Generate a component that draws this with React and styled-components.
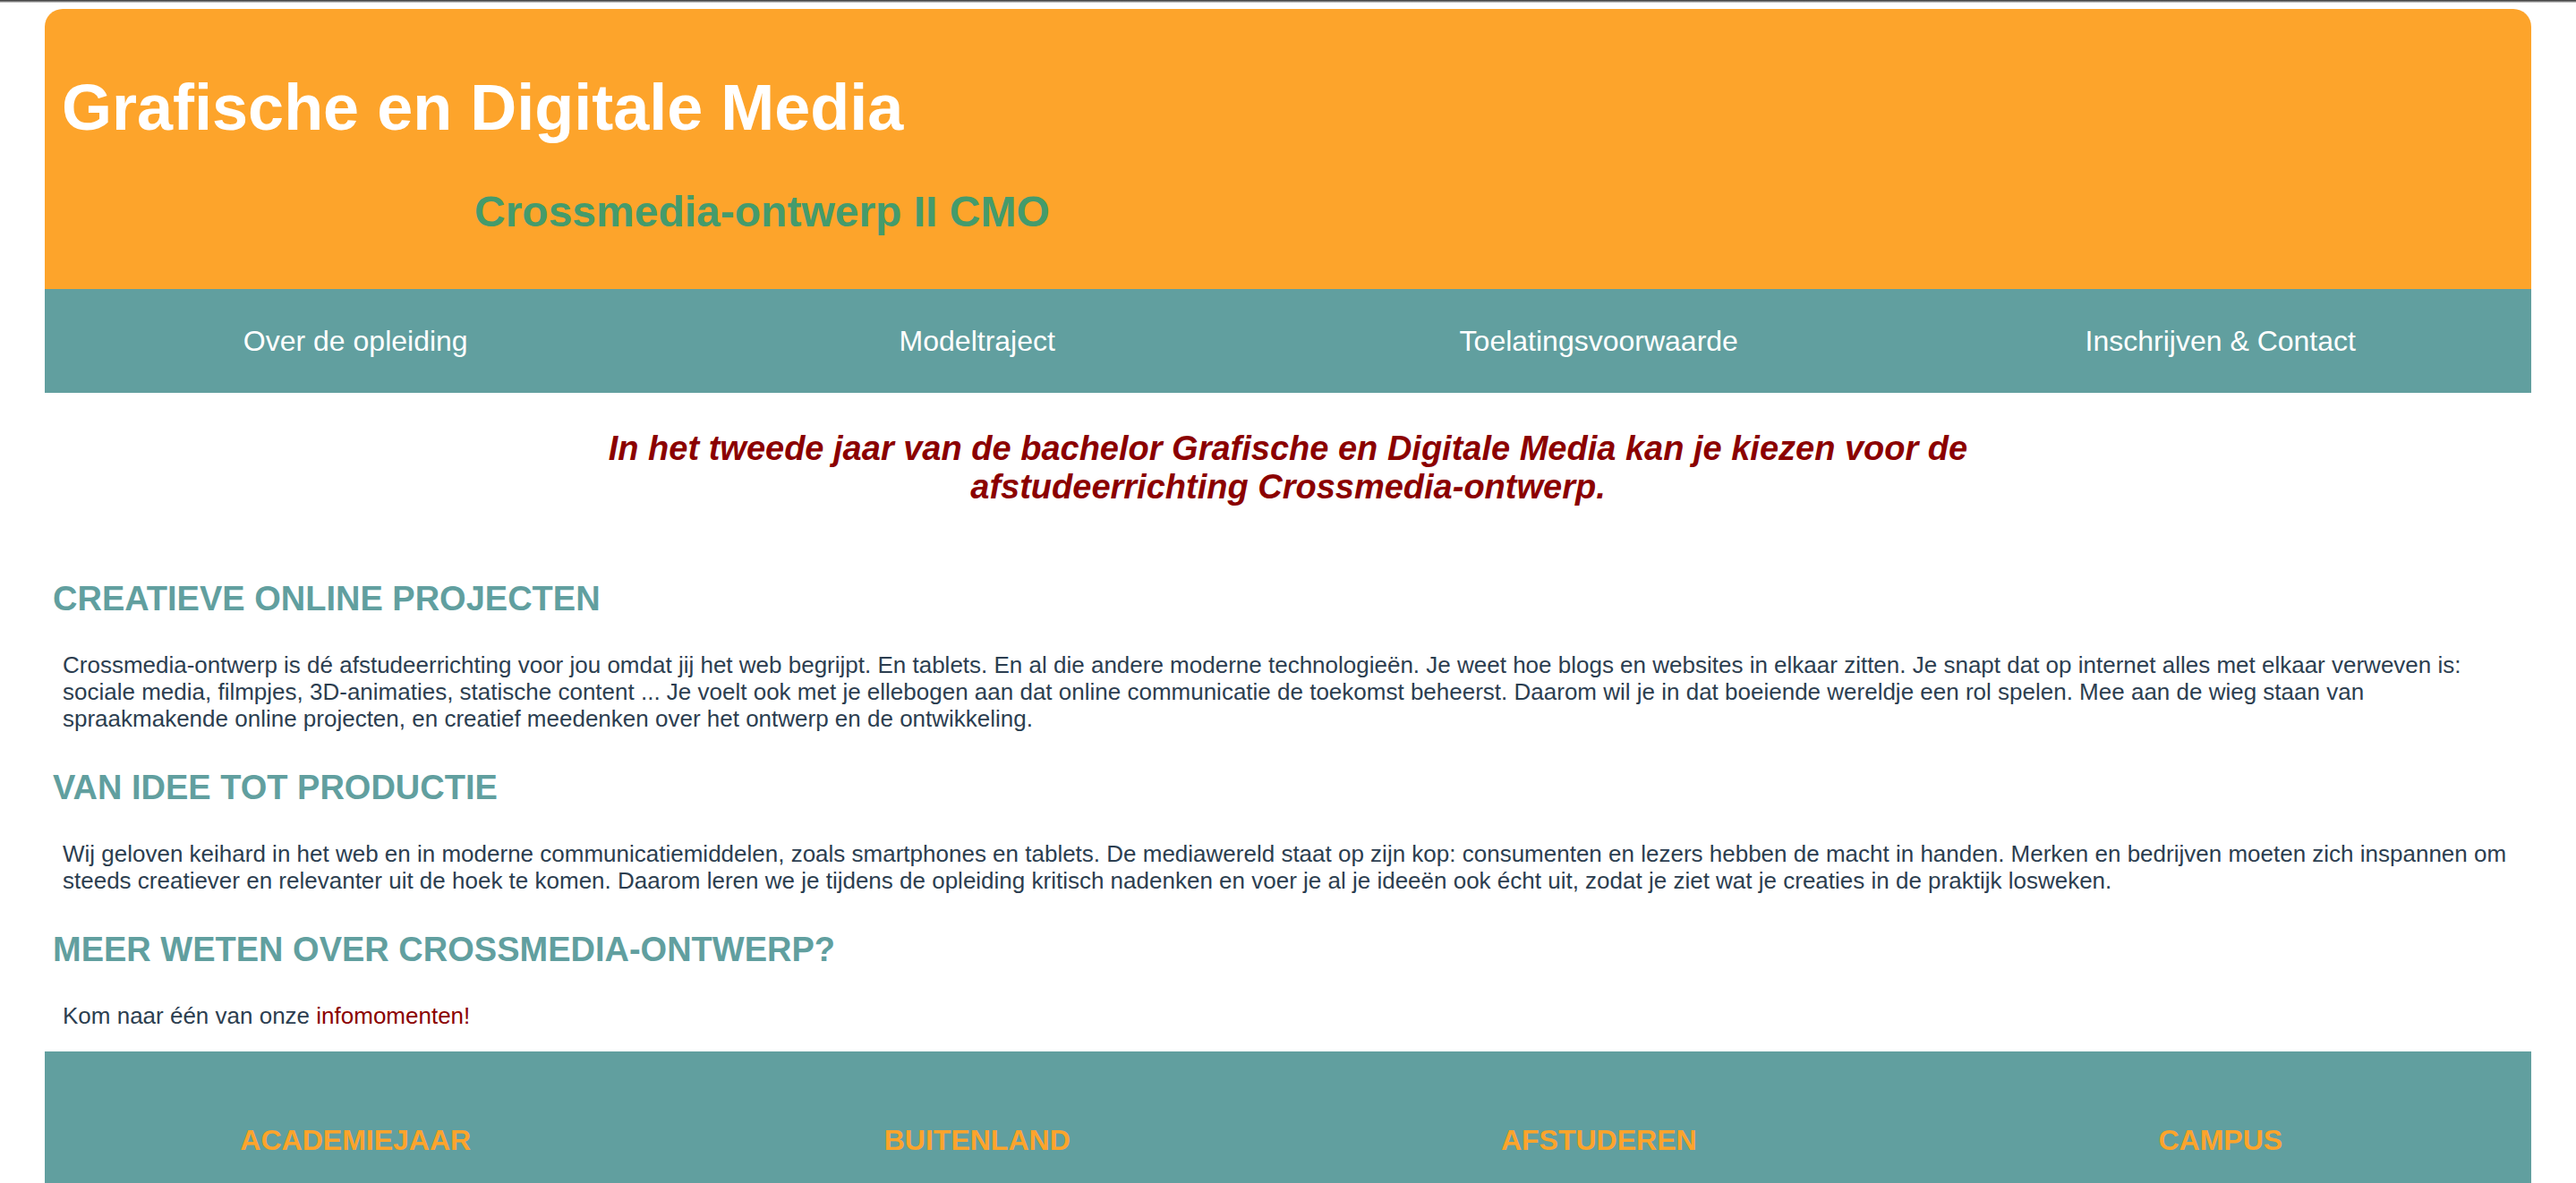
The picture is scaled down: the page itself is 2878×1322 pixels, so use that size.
import React from 'react';
import styled, { createGlobalStyle } from 'styled-components';

const orange = '#fda42b';
const teal = '#619f9f';
const darkRed = '#8b0000';

const GlobalStyle = createGlobalStyle`
  html, body {
    margin: 0;
    padding: 0;
    background: #ffffff;
  }
  body {
    font-family: "Liberation Sans", Arial, Helvetica, sans-serif;
  }
`;

const TopEdge = styled.div`
  height: 3px;
  background: linear-gradient(#2e2e2e, #8a8a8a 60%, #e6e6e6);
`;

const Page = styled.div`
  margin: 7px 50px 0;
`;

const Header = styled.header`
  background: ${orange};
  border-radius: 20px 20px 0 0;
  padding: 69px 19px 59px;
`;

const Title = styled.h1`
  margin: 0;
  font-size: 72px;
  line-height: 82px;
  font-weight: bold;
  color: #ffffff;
`;

const Subtitle = styled.h2`
  margin: 48px 0 0 461px;
  font-size: 48px;
  line-height: 55px;
  font-weight: bold;
  color: #449b6c;
`;

const Nav = styled.nav`
  display: grid;
  grid-template-columns: repeat(4, 1fr);
  align-items: center;
  height: 116px;
  background: ${teal};
`;

const NavLink = styled.a`
  text-align: center;
  font-size: 32px;
  color: #ffffff;
  text-decoration: none;
  cursor: pointer;
`;

const Main = styled.main`
  padding: 0;
`;

const Intro = styled.p`
  width: 1600px;
  margin: 41px auto 81px;
  text-align: center;
  font-size: 38px;
  line-height: 43px;
  font-weight: bold;
  font-style: italic;
  color: ${darkRed};
`;

const Heading = styled.h3`
  margin: 0 0 37px;
  padding: 0 9px;
  font-size: 38px;
  line-height: 44px;
  font-weight: bold;
  text-transform: uppercase;
  color: ${teal};
`;

const Paragraph = styled.p`
  margin: 0 0 40px;
  padding: 0 20px;
  font-size: 26px;
  line-height: 30px;
  color: #2c3e50;

  &:last-child {
    margin-bottom: 25px;
  }
`;

const InlineLink = styled.a`
  color: ${darkRed};
  text-decoration: none;
`;

const Footer = styled.footer`
  display: grid;
  grid-template-columns: repeat(4, 1fr);
  background: ${teal};
  padding: 81px 0 120px;
`;

const FooterHeading = styled.h4`
  margin: 0;
  text-align: center;
  font-size: 32px;
  line-height: 37px;
  font-weight: bold;
  text-transform: uppercase;
  color: ${orange};
`;

const navItems = ['Over de opleiding', 'Modeltraject', 'Toelatingsvoorwaarde', 'Inschrijven & Contact'];
const footerItems = ['Academiejaar', 'Buitenland', 'Afstuderen', 'Campus'];

export default function App() {
  return (
    <>
      <GlobalStyle />
      <TopEdge />
      <Page>
        <Header>
          <Title>Grafische en Digitale Media</Title>
          <Subtitle>Crossmedia-ontwerp II CMO</Subtitle>
        </Header>
        <Nav>
          {navItems.map((item) => (
            <NavLink key={item}>{item}</NavLink>
          ))}
        </Nav>
        <Main>
          <Intro>
            In het tweede jaar van de bachelor Grafische en Digitale Media kan je kiezen voor de
            afstudeerrichting Crossmedia-ontwerp.
          </Intro>

          <Heading>Creatieve online projecten</Heading>
          <Paragraph>
            Crossmedia-ontwerp is dé afstudeerrichting voor jou omdat jij het web begrijpt. En tablets. En al die
            andere moderne technologieën. Je weet hoe blogs en websites in elkaar zitten. Je snapt dat op internet
            alles met elkaar verweven is: sociale media, filmpjes, 3D-animaties, statische content ... Je voelt ook
            met je ellebogen aan dat online communicatie de toekomst beheerst. Daarom wil je in dat boeiende
            wereldje een rol spelen. Mee aan de wieg staan van spraakmakende online projecten, en creatief
            meedenken over het ontwerp en de ontwikkeling.
          </Paragraph>

          <Heading>Van idee tot productie</Heading>
          <Paragraph>
            Wij geloven keihard in het web en in moderne communicatiemiddelen, zoals smartphones en tablets. De
            mediawereld staat op zijn kop: consumenten en lezers hebben de macht in handen. Merken en bedrijven
            moeten zich inspannen om steeds creatiever en relevanter uit de hoek te komen. Daarom leren we je
            tijdens de opleiding kritisch nadenken en voer je al je ideeën ook écht uit, zodat je ziet wat je
            creaties in de praktijk losweken.
          </Paragraph>

          <Heading>Meer weten over Crossmedia-ontwerp?</Heading>
          <Paragraph>
            Kom naar één van onze <InlineLink>infomomenten!</InlineLink>
          </Paragraph>
        </Main>
        <Footer>
          {footerItems.map((item) => (
            <FooterHeading key={item}>{item}</FooterHeading>
          ))}
        </Footer>
      </Page>
    </>
  );
}
